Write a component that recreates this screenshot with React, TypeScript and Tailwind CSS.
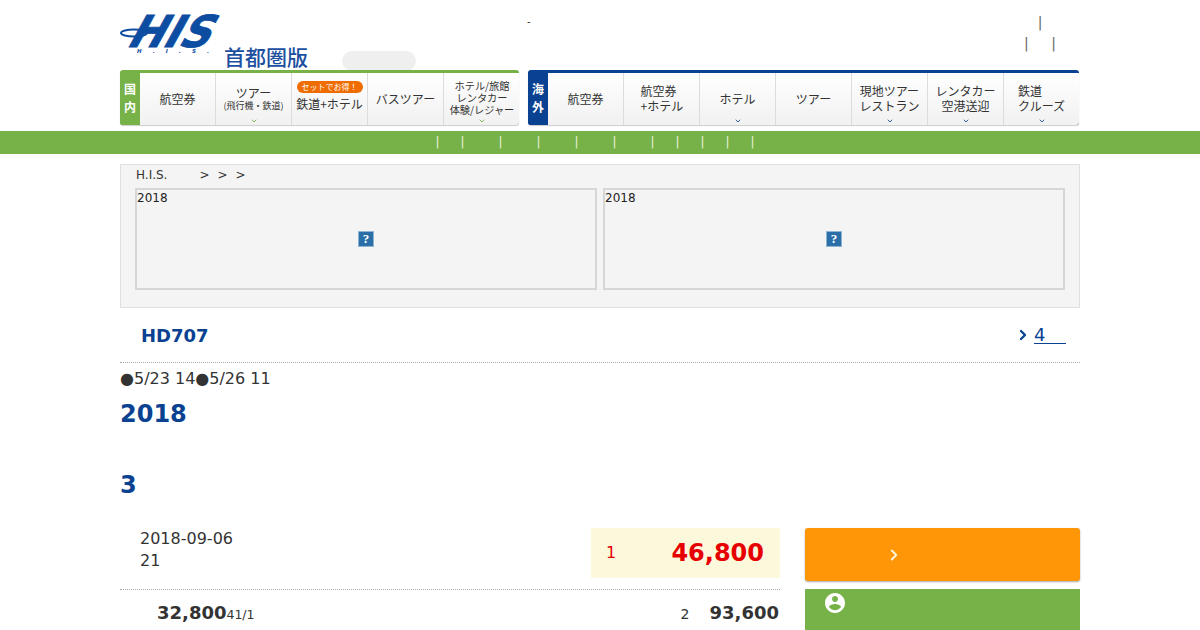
import { ChevronRight, ChevronDown } from 'lucide-react'

const domestic = [
  { key: 'air', lines: ['航空券'] },
  { key: 'tour', lines: ['ツアー'], sub: '(飛行機・鉄道)', more: true },
  { key: 'rail', lines: ['鉄道+ホテル'], badge: 'セットでお得！' },
  { key: 'bus', lines: ['バスツアー'] },
  { key: 'hotel', lines: ['ホテル/旅館', 'レンタカー', '体験/レジャー'], more: true, small: true },
]

const overseas = [
  { key: 'air', lines: ['航空券'] },
  { key: 'airhotel', lines: ['航空券', '+ホテル'], left: 'w-[42px] text-left' },
  { key: 'hotel', lines: ['ホテル'], more: true },
  { key: 'tour', lines: ['ツアー'] },
  { key: 'local', lines: ['現地ツアー', 'レストラン'], more: true },
  { key: 'car', lines: ['レンタカー', '空港送迎'], more: true },
  { key: 'rail', lines: ['鉄道', 'クルーズ'], more: true, left: 'w-[48px] text-left' },
]

const stripGaps = ['ml-0', 'ml-[21px]', 'ml-[34px]', 'ml-[34px]', 'ml-[34px]', 'ml-[34px]', 'ml-[34px]', 'ml-[21px]', 'ml-[21px]', 'ml-[21px]', 'ml-[21px]']

type NavEntry = {
  key: string
  lines: string[]
  sub?: string
  badge?: string
  more?: boolean
  small?: boolean
  left?: string
}

function NavItem({ item, tint }: { item: NavEntry; tint: string }) {
  return (
    <div className="relative flex h-[52px] w-[76px] shrink-0 flex-col items-center justify-center border-r border-[#dcdcdc] bg-gradient-to-b from-white to-[#f1f1f1] pb-[2px] font-['Noto_Sans_CJK_JP','DejaVu_Sans',sans-serif] text-[#333] last:border-r-0">
      {item.badge && (
        <span className="mb-[3px] mt-[-5px] rounded-full bg-[#ef6c00] px-[5px] text-[8px] leading-[12px] text-white">{item.badge}</span>
      )}
      <div className={`${item.left ?? 'text-center'} ${item.small ? 'text-[10.2px] leading-[12px]' : 'text-[12px] leading-[15px]'} whitespace-nowrap`}>
        {item.lines.map((line) => (
          <div key={line}>{line}</div>
        ))}
      </div>
      {item.sub && <div className="mt-[1px] whitespace-nowrap text-[9px] leading-[10px]">{item.sub}</div>}
      {item.more && <ChevronDown className={`absolute bottom-0 left-1/2 h-[8px] w-[8px] -translate-x-1/2 ${tint}`} strokeWidth={2.5} />}
    </div>
  )
}

function NavGroup({ label, items, color, tint, width }: { label: string[]; items: NavEntry[]; color: string; tint: string; width: string }) {
  return (
    <div className={`flex h-[55px] ${width} overflow-hidden rounded-[3px] border-t-[3px] shadow-[0_1px_1px_rgba(0,0,0,0.2)] ${color}`}>
      <div className={`flex w-[20px] shrink-0 flex-col items-center justify-center text-[12px] font-bold leading-[18px] text-white ${color}`}>
        {label.map((c) => (
          <span key={c}>{c}</span>
        ))}
      </div>
      {items.map((item) => (
        <NavItem key={item.key} item={item} tint={tint} />
      ))}
    </div>
  )
}

function Placeholder({ title }: { title: string }) {
  return (
    <div className="relative h-[102px] w-[462px] rounded-[1px] border-2 border-[#d6d6d6] pt-[1px] text-[12px] leading-[14px] text-[#222]">
      <span>{title}</span>
      <div className="absolute left-1/2 top-1/2 flex h-4 w-4 -translate-x-1/2 -translate-y-1/2 items-center justify-center border border-[#8fb4d4] bg-[#2a6fa8] font-['Liberation_Serif',serif] text-[13px] font-bold text-white">
        ?
      </div>
    </div>
  )
}

export default function App() {
  return (
    <div className="h-[630px] w-[1200px] overflow-hidden bg-white font-['DejaVu_Sans','Noto_Sans_CJK_JP',sans-serif]">
      <div className="mx-auto w-[960px]">
        {/* Header */}
        <div className="flex h-[70px] items-start">
          <svg className="mt-[14px] h-[40px] w-[104px] shrink-0" viewBox="0 0 104 40" aria-label="H.I.S.">
            <ellipse cx="14" cy="19" rx="13" ry="3.5" fill="none" stroke="#0c4da2" strokeWidth="2" />
            <g transform="translate(5,33) skewX(-29)">
              <text x="0" y="0" textLength="82" lengthAdjust="spacingAndGlyphs" fill="#0c4da2" stroke="#0c4da2" strokeWidth="0.8" fontFamily="DejaVu Sans" fontWeight="700" fontSize="44">HIS</text>
            </g>
            <text x="17" y="39" textLength="72" fill="#0c4da2" fontFamily="DejaVu Sans" fontWeight="700" fontStyle="italic" fontSize="5.5">H . I . S .</text>
          </svg>
          <div className="mt-[46px] whitespace-nowrap text-[21px] font-medium leading-[24px] text-[#1d4f9f]">首都圏版</div>
          <div className="ml-[34px] mt-[51px] h-[20px] w-[74px] rounded-full bg-[#efefef]"></div>
          <div className="ml-[111px] mt-[14px] text-[10px] leading-4 text-[#333]">-</div>
          <div className="ml-auto mr-[24px] mt-[14px] flex w-[32px] flex-col items-center text-[14px] leading-[17px] text-[#666]">
            <span>|</span>
            <div className="mt-[4px] flex w-[32px] justify-between">
              <span>|</span>
              <span>|</span>
            </div>
          </div>
        </div>

        {/* Nav */}
        <div className="flex gap-[9px]">
          <NavGroup label={['国', '内']} items={domestic} color="border-[#76b247] bg-[#76b247]" tint="text-[#76b247]" width="w-[399px]" />
          <NavGroup label={['海', '外']} items={overseas} color="border-[#0a4191] bg-[#0a4191]" tint="text-[#0a4191]" width="w-[551px]" />
        </div>
      </div>

      {/* Green strip */}
      <div className="mt-[6px] flex h-[23px] items-center justify-center bg-[#76b247] pr-[10px] text-[12px] text-[#e8f2dc]">
        {stripGaps.map((gap, i) => (
          <span key={i} className={`${gap} w-[4px] text-center leading-[23px]`}>|</span>
        ))}
      </div>

      <div className="mx-auto mt-[10px] w-[960px]">
        {/* Breadcrumb panel */}
        <div className="h-[144px] border border-[#e0e0e0] bg-[#f4f4f4] px-[14px]">
          <div className="mb-[4px] flex h-[19px] items-center pl-[1px] text-[12px] text-[#333]">
            <span>H.I.S.</span>
            <span className="ml-[32px]">&gt;</span>
            <span className="ml-[8px]">&gt;</span>
            <span className="ml-[8px]">&gt;</span>
          </div>
          <div className="flex gap-[6px]">
            <Placeholder title="2018" />
            <Placeholder title="2018" />
          </div>
        </div>

        {/* Title */}
        <div className="flex h-[55px] items-center justify-between border-b border-dotted border-[#aaa] pl-[21px] pr-[14px]">
          <span className="text-[18px] font-bold text-[#0a4191]">HD707</span>
          <div className="flex items-center text-[#0a4191]">
            <ChevronRight className="h-[16px] w-[16px]" strokeWidth={3.5} />
            <span className="ml-[3px] w-[32px] border-b border-[#0a4191] text-[18px] leading-[17px]">4</span>
          </div>
        </div>

        <div className="mt-[6px] text-[16px] leading-[20px] text-[#333]">●5/23 14●5/26 11</div>
        <div className="mt-[10px] text-[24px] font-bold leading-[30px] text-[#0a4191]">2018</div>
        <div className="mt-[41px] text-[24px] font-bold leading-[30px] text-[#0a4191]">3</div>

        {/* Price rows */}
        <div className="mt-[28px] flex justify-between">
          <div className="w-[660px]">
            <div className="flex h-[62px] justify-between border-b border-dotted border-[#aaa]">
              <div className="pl-[20px] text-[16px] leading-[22px] text-[#333]">
                <div>2018-09-06</div>
                <div>21</div>
              </div>
              <div className="flex h-[50px] w-[189px] items-center justify-between bg-[#fcf8dc] pl-[15px] pr-[16px] text-[#e60000]">
                <span className="text-[16px]">1</span>
                <span className="text-[24px] font-bold">46,800</span>
              </div>
            </div>
            <div className="flex h-[44px] items-center justify-between pl-[37px] text-[#333]">
              <div className="flex items-baseline">
                <span className="text-[18px] font-bold">32,800</span>
                <span className="text-[12.5px]">41/1</span>
              </div>
              <div className="flex items-baseline pr-[1px]">
                <span className="text-[14px]">2</span>
                <span className="ml-[20px] text-[18px] font-bold">93,600</span>
              </div>
            </div>
          </div>

          <div className="w-[275px]">
            <div className="flex h-[53px] items-center rounded-[3px] bg-[#ff9608] pl-[80px] shadow-[0_1px_2px_rgba(0,0,0,0.35)]">
              <ChevronRight className="h-[18px] w-[18px] text-[#fff6df]" strokeWidth={2.5} />
            </div>
            <div className="mt-[8px] h-[60px] bg-[#76b247] pl-[18px] pt-[2px]">
              <svg className="h-6 w-6" viewBox="0 0 24 24" fill="#fff">
                <path d="M12 2C6.48 2 2 6.48 2 12s4.48 10 10 10 10-4.48 10-10S17.52 2 12 2zm0 3c1.66 0 3 1.34 3 3s-1.34 3-3 3-3-1.34-3-3 1.34-3 3-3zm0 14.2c-2.5 0-4.71-1.28-6-3.22.03-1.99 4-3.08 6-3.08 1.99 0 5.97 1.09 6 3.08-1.29 1.94-3.5 3.22-6 3.22z" />
              </svg>
            </div>
          </div>
        </div>
      </div>
    </div>
  )
}
